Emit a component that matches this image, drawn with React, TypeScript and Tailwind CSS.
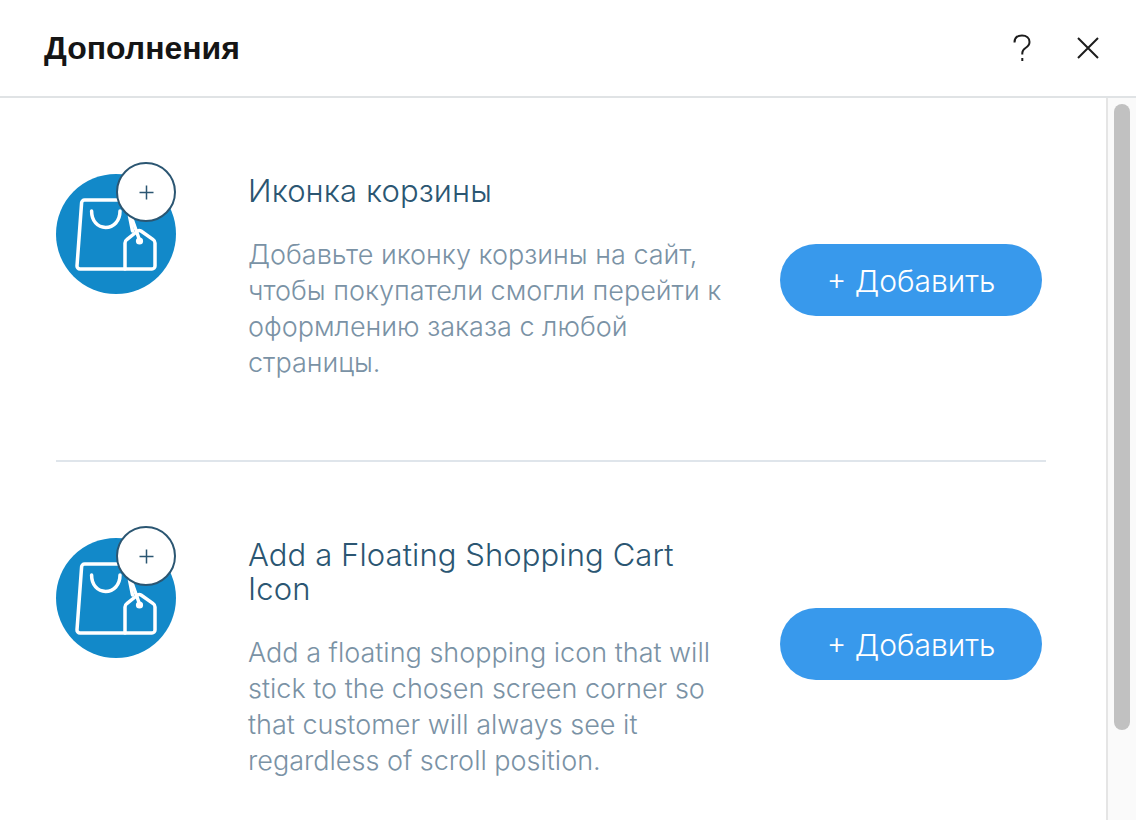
const rows = [
  {
    title: ['Иконка корзины'],
    lines: [
      'Добавьте иконку корзины на сайт,',
      'чтобы покупатели смогли перейти к',
      'оформлению заказа с любой',
      'страницы.',
    ],
  },
  {
    title: ['Add a Floating Shopping Cart', 'Icon'],
    lines: [
      'Add a floating shopping icon that will',
      'stick to the chosen screen corner so',
      'that customer will always see it',
      'regardless of scroll position.',
    ],
  },
];

function BagIcon() {
  return (
    <div className="relative w-[120px] h-[120px] rounded-full bg-[#1289c9] shrink-0">
      <svg viewBox="0 0 120 120" className="w-[120px] h-[120px]" fill="none" stroke="#fff" strokeWidth="3.5" strokeLinejoin="round" strokeLinecap="round">
        <path d="M69 95H24a3 3 0 0 1-3-3.200L25.600 29a3 3 0 0 1 3-3H62" />
        <path d="M35.600 37c0 10 6 16.400 14 16.400S64 47 64 37" />
        <path d="M73.500 42l3 15" />
        <path d="M75 42l8.500 24" />
        <path d="M69 95h27a3 3 0 0 0 3-3V69c0-1.500-.6-2.600-1.800-3.400L85 57a3 3 0 0 0-3.400 0L70.800 65.600C69.600 66.400 69 67.500 69 69z" />
        <circle cx="83.500" cy="67" r="3.600" fill="#fff" stroke="none" />
      </svg>
      <div className="absolute left-[60px] top-[-12px] w-[60px] h-[60px] rounded-full bg-white border-2 border-[#2b5672] flex items-center justify-center">
        <svg viewBox="0 0 15 15" className="w-[15px] h-[15px]" stroke="#2b5672" strokeWidth="1.500">
          <path d="M7.500 0.500v14M0.500 7.500h14" />
        </svg>
      </div>
    </div>
  );
}

export default function App() {
  return (
    <div className="w-[1136px] h-[820px] overflow-hidden bg-white flex flex-col font-['Inter',sans-serif]">
      <header className="h-[98px] shrink-0 border-b-2 border-[#e0e3e5] flex items-center justify-between pl-[44px] pr-[36px]">
        <h1 className="text-[32px] leading-[36px] font-bold text-[#151515] font-['Liberation_Sans',sans-serif]">Дополнения</h1>
        <div className="flex items-center gap-[45px]">
          <svg viewBox="0 0 18 28" className="w-[18px] h-[28px]" fill="none" stroke="#1c1c1c" strokeWidth="2">
            <path d="M1.500 8.500C1.500 4 4.500 1.500 9 1.500s7.500 2.500 7.500 6.500c0 3-1.700 4.500-4 6-2 1.300-3.200 2.500-3.200 5v1.500" />
            <path d="M9.300 24v3" />
          </svg>
          <svg viewBox="0 0 24 24" className="w-[24px] h-[24px]" stroke="#1c1c1c" strokeWidth="2">
            <path d="M2 2l20 20M22 2L2 22" />
          </svg>
        </div>
      </header>
      <div className="flex-1 flex min-h-0">
        <main className="flex-1 min-w-0 pl-[56px] pr-[60px]">
          {rows.map((row, i) => (
            <section key={i} className={`flex pt-[76px] pb-[79px] ${i === 0 ? 'border-b-2 border-[#dfe5eb]' : ''}`}>
              <BagIcon />
              <div className="w-[604px] shrink-0 pl-[72px] pr-[52px] font-light">
                <h2 className="text-[31px] leading-[34px] tracking-[0.1px] font-[350] text-[#2b5672]">
                  {row.title.map((t) => (
                    <div key={t}>{t}</div>
                  ))}
                </h2>
                <div className="mt-[29px] text-[27px] leading-[36px] text-[#7a92a5]">
                  {row.lines.map((l) => (
                    <div key={l}>{l}</div>
                  ))}
                </div>
              </div>
              <button className="mt-[70px] h-[72px] w-[262px] shrink-0 rounded-full bg-[#3899ec] text-white text-[30px] font-light pt-[2px]">
                + Добавить
              </button>
            </section>
          ))}
        </main>
        <aside className="w-[30px] shrink-0 border-l-2 border-[#e5e5e5] bg-[#fafafa] pt-[6px] pl-[6px]">
          <div className="w-[16px] h-[626px] rounded-full bg-[#c1c1c1]" />
        </aside>
      </div>
    </div>
  );
}
